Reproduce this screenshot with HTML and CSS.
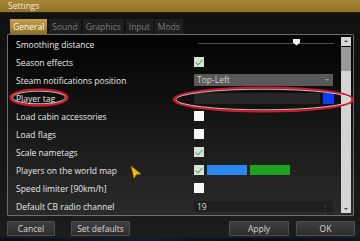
FILE: index.html
```html
<!DOCTYPE html>
<html lang="en">
<head>
  <meta charset="UTF-8" />
  <title>Settings</title>
  <link rel="stylesheet" href="styles.css">
</head>
<body>
  <div class="window">
    <div class="titlebar">Settings</div>

    <div class="tabs">
      <div class="tab active">General</div>
      <div class="tab">Sound</div>
      <div class="tab">Graphics</div>
      <div class="tab">Input</div>
      <div class="tab">Mods</div>
    </div>

    <div class="panel">
      <div class="rows">
        <div class="row">
          <span class="label">Smoothing distance</span>
          <div class="control">
            <div class="slider"><div class="knob"></div></div>
          </div>
        </div>
        <div class="row">
          <span class="label">Season effects</span>
          <div class="control"><span class="check on"></span></div>
        </div>
        <div class="row">
          <span class="label">Steam notifications position</span>
          <div class="control"><div class="select">Top-Left<span class="arrow"></span></div></div>
        </div>
        <div class="row">
          <span class="label">Player tag</span>
          <div class="control">
            <div class="text-input"></div>
            <div class="swatch"></div>
          </div>
        </div>
        <div class="row">
          <span class="label">Load cabin accessories</span>
          <div class="control"><span class="check"></span></div>
        </div>
        <div class="row">
          <span class="label">Load flags</span>
          <div class="control"><span class="check"></span></div>
        </div>
        <div class="row">
          <span class="label">Scale nametags</span>
          <div class="control"><span class="check on"></span></div>
        </div>
        <div class="row">
          <span class="label">Players on the world map</span>
          <div class="control">
            <span class="check on"></span>
            <div class="color blue"></div>
            <div class="color green"></div>
          </div>
        </div>
        <div class="row">
          <span class="label">Speed limiter [90km/h]</span>
          <div class="control"><span class="check"></span></div>
        </div>
        <div class="row">
          <span class="label">Default CB radio channel</span>
          <div class="control"><div class="number">19<span class="spin">&#8942;</span></div></div>
        </div>
      </div>
      <div class="scrollbar">
        <div class="sb-btn up"></div>
        <div class="sb-thumb"></div>
        <div class="sb-track"></div>
        <div class="sb-btn down"></div>
      </div>
    </div>

    <div class="buttons">
      <div class="group">
        <button class="cancel">Cancel</button>
        <button class="defaults">Set defaults</button>
      </div>
      <div class="group">
        <button class="apply">Apply</button>
        <button class="ok">OK</button>
      </div>
    </div>
    <div class="backdrop"></div>

    <!-- annotation marks drawn over the screenshot -->
    <svg class="marks" width="360" height="241" viewBox="0 0 360 241">
      <ellipse cx="39" cy="97.5" rx="28.5" ry="8" fill="none" stroke="#d8182a" stroke-width="2.2"/>
      <ellipse cx="39" cy="97.5" rx="26.6" ry="6.3" fill="none" stroke="#f4e8e8" stroke-width="0.8"/>
      <ellipse cx="263.5" cy="99.5" rx="89.5" ry="12" fill="none" stroke="#d8182a" stroke-width="2.2"/>
      <ellipse cx="263.5" cy="99.5" rx="87.6" ry="10.3" fill="none" stroke="#f4e8e8" stroke-width="0.8"/>
      <polygon points="131,166 141,174 136.5,174.5 134,178.5" fill="#f0c000" stroke="#8a6a00" stroke-width="0.5"/>
    </svg>
  </div>
</body>
</html>
```

FILE: styles.css
```css
body {
  margin: 0;
  background-color: #0a0d14;
  font-family: "Open Sans", "Noto Sans", sans-serif;
}

.window {
  position: relative;
  width: 360px;
  height: 241px;
  overflow: hidden;
  display: flex;
  flex-direction: column;
  background: linear-gradient(#111111, #141414 60%, #1d1d1d);
}

.titlebar {
  height: 12px;
  line-height: 12px;
  padding-left: 8px;
  font-size: 8.5px;
  color: #f2ecdc;
  background: linear-gradient(#a9873a, #937025);
  border-bottom: 1px solid #2a2210;
}

.tabs {
  display: flex;
  gap: 2px;
  margin: 6px 0 0 10px;
  height: 15px;
}

.tab {
  padding: 0 3px;
  line-height: 15px;
  font-size: 8.5px;
  color: #7c7c7c;
  background-color: #1f1f1f;
}

.tab.active {
  color: #fff;
  background: linear-gradient(#c8a050, #a8832f 60%, #8f6c26);
}

.panel {
  display: flex;
  margin: 0 6px 0 7px;
  height: 180px;
  border: 1px solid #6e6e6e;
  border-radius: 1px;
  background: linear-gradient(#020202, #0e0e0e 30%, #2b2b2b);
}

.rows {
  flex: 1;
  padding-left: 8px;
}

.row {
  display: flex;
  align-items: center;
  height: 18px;
}

.label {
  width: 178px;
  font-size: 8.5px;
  color: #e8e8e8;
}

.control {
  display: flex;
  align-items: center;
  gap: 3px;
}

.slider {
  position: relative;
  width: 136px;
  height: 1px;
  margin: -2px 0 0 4px;
  background-color: #4c4c4c;
}

.knob {
  position: absolute;
  left: 95px;
  top: -4px;
  width: 7px;
  height: 7px;
  background-color: #f0f0f0;
  clip-path: polygon(0 0, 100% 0, 100% 60%, 50% 100%, 0 60%);
}

.check {
  position: relative;
  width: 10px;
  height: 10px;
  background-color: #f6f6f6;
}

.check.on {
  background-color: #d8e2d8;
}

.check.on::after {
  content: "";
  position: absolute;
  left: 3px;
  top: 1px;
  width: 3px;
  height: 6px;
  border: solid #4da860;
  border-width: 0 1.5px 1.5px 0;
  transform: rotate(40deg);
}

.select {
  position: relative;
  width: 136px;
  height: 12px;
  padding-left: 3px;
  line-height: 12px;
  font-size: 8.5px;
  color: #cfcfcf;
  background-color: #595959;
}

.arrow {
  position: absolute;
  right: 4px;
  top: 5px;
  border: 2px solid transparent;
  border-top: 2px solid #9a9a9a;
}

.text-input {
  width: 126px;
  height: 11px;
  background-color: #262626;
}

.swatch {
  width: 11px;
  height: 11px;
  background-color: #0c3cf6;
}

.color {
  width: 40px;
  height: 10px;
}

.color.blue {
  background-color: #2a88ee;
}

.color.green {
  background-color: #1fa21f;
}

.number {
  position: relative;
  width: 136px;
  height: 11px;
  padding-left: 3px;
  line-height: 11px;
  font-size: 8.5px;
  color: #dcdcdc;
  background-color: #1f1f1f;
}

.spin {
  position: absolute;
  right: 4px;
  top: 0;
  font-size: 8px;
  color: #6a6a6a;
}

.scrollbar {
  display: flex;
  flex-direction: column;
  width: 10px;
  margin: 2px 2px 2px 0;
}

.sb-btn {
  height: 9px;
  background-color: #d6d6d6;
  position: relative;
}

.sb-btn::after {
  content: "";
  position: absolute;
  left: 3px;
  border: 2px solid transparent;
}

.sb-btn.up::after {
  top: 1px;
  border-bottom: 2px solid #444;
}

.sb-btn.down::after {
  top: 4px;
  border-top: 2px solid #444;
}

.sb-thumb {
  height: 24px;
  margin-top: 1px;
  background-color: #9a9a9a;
}

.sb-track {
  flex: 1;
  background-color: #d4d4d4;
}

.buttons {
  display: flex;
  justify-content: space-between;
  margin: 5px 5px 0 7px;
}

.group {
  display: flex;
  gap: 7px;
}

button {
  height: 15px;
  padding: 0;
  font-family: "Open Sans", "Noto Sans", sans-serif;
  font-size: 8.5px;
  color: #d8d8d8;
  border: 1px solid #4e4e4e;
  border-radius: 1px;
  background: linear-gradient(#3e3e3e, #2e2e2e);
}

.cancel {
  width: 48px;
}

.defaults {
  width: 59px;
  margin-left: 9px;
}

.apply {
  width: 60px;
}

.ok {
  width: 59px;
}

.backdrop {
  flex: 1;
  margin-top: 2px;
  background: linear-gradient(90deg, #0c0f18, #141c2a 40%, #0a0d14 70%, #101622);
}

.marks {
  position: absolute;
  left: 0;
  top: 0;
}
```
